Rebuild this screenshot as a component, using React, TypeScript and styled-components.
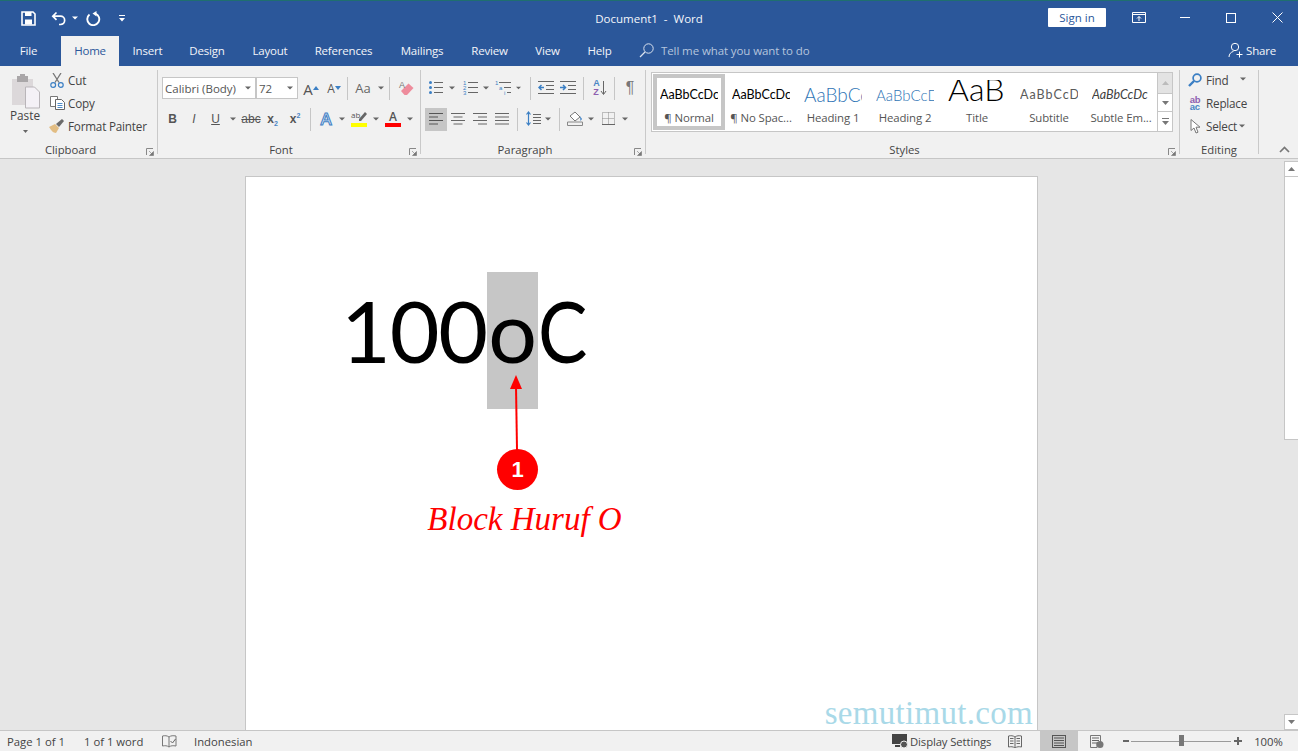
import React from "react";
import styled, { createGlobalStyle } from "styled-components";

const Global = createGlobalStyle`
  html, body { margin: 0; padding: 0; height: 100%; overflow: hidden; }
  body { font-family: "Open Sans", "Noto Sans", sans-serif; font-size: 12px; color: #444; }
  #root { height: 100%; }
`;

const Shell = styled.div`
  height: 751px; width: 1298px; display: flex; flex-direction: column; overflow: hidden; background: #e6e6e6;
`;
const TitleBar = styled.header`
  height: 35px; flex: none; background: #2b579a; border-top: 1px solid #1f6f6f; position: relative;
  display: flex; align-items: center; color: #fff;
`;
const Qat = styled.div`display: flex; align-items: center; padding-left: 21px; height: 100%; padding-bottom: 1px; box-sizing: border-box;`;
const QatBtn = styled.span<{ $w: number }>`width: ${p => p.$w}px; display: flex; align-items: center; flex: none;`;
const DocTitle = styled.div`
  position: absolute; left: 0; right: 0; top: 10px; text-align: center; font-size: 11.5px; line-height: 16px; white-space: pre; color: #f4f6fa;
`;
const WinControls = styled.div`margin-left: auto; display: flex; align-items: center; height: 100%; padding-bottom: 2px; box-sizing: border-box;`;
const SignIn = styled.div`
  width: 58px; height: 19px; background: #fff; color: #2b579a; font-size: 11.5px; line-height: 19px; text-align: center; border-radius: 1px; margin-right: 26px;
`;
const WinBtn = styled.span<{ $w: number }>`width: ${p => p.$w}px; display: flex; align-items: center; flex: none;`;

const TabBar = styled.nav`
  height: 30px; flex: none; background: #2b579a; display: flex; align-items: stretch; color: #fff; font-size: 11.5px; letter-spacing: -0.2px;
`;
const Tab = styled.div<{ $w: number; $active?: boolean; $ml?: number }>`
  width: ${p => p.$w}px; margin-left: ${p => p.$ml ?? 0}px; display: flex; align-items: center; justify-content: center; flex: none; padding-bottom: 2px; box-sizing: border-box;
  background: ${p => (p.$active ? "#f1f1f1" : "transparent")}; color: ${p => (p.$active ? "#2b579a" : "#f3f5f9")};
`;
const TellMe = styled.div`display: flex; align-items: center; gap: 7px; margin-left: 15px; color: #b5c5dd; padding-bottom: 2px; letter-spacing: -0.1px;`;
const Share = styled.div`margin-left: auto; margin-right: 22px; display: flex; align-items: center; gap: 2px; color: #f3f5f9; padding-bottom: 2px;`;

const Ribbon = styled.section`
  height: 88px; flex: none; padding-top: 4px; background: #f1f1f1; border-bottom: 1px solid #c6c6c6; display: flex; align-items: flex-start;
`;
const Group = styled.div<{ $w: number }>`
  width: ${p => p.$w}px; height: 84px; flex: none; box-sizing: border-box; border-right: 1px solid #c9c9c9; display: flex; flex-direction: column; position: relative;
`;
const GroupBody = styled.div<{ $pt?: number; $pl?: number }>`
  flex: 1; min-height: 0; display: flex; padding-top: ${p => p.$pt ?? 0}px; padding-left: ${p => p.$pl ?? 0}px;
`;
const GroupLabel = styled.div<{ $pr?: number }>`
  height: 16px; margin-bottom: -4px; line-height: 16px; font-size: 11.3px; text-align: center; color: #444; padding-right: ${p => p.$pr ?? 0}px;
`;
const Launcher = styled.span`position: absolute; right: 3px; bottom: -2px; width: 8px; height: 8px; display: flex;`;

const PasteCol = styled.div`
  width: 50px; flex: none; display: flex; flex-direction: column; align-items: center; padding-top: 4px; font-size: 11.8px; line-height: 14px;
`;
const PasteLabel = styled.div`margin-top: -1px; height: 16px;`;
const SmallCol = styled.div`display: flex; flex-direction: column; gap: 3px; margin-left: -2px;`;
const SmallRow = styled.div`height: 20px; display: flex; align-items: center; gap: 2px; white-space: nowrap; font-size: 11.7px; letter-spacing: -0.2px;`;
const SmallIcon = styled.span`width: 18px; display: flex; justify-content: center; flex: none;`;

const Stack = styled.div`display: flex; flex-direction: column; gap: 8px;`;
const ToolRow = styled.div`height: 23px; display: flex; align-items: flex-start;`;
const Tool = styled.span<{ $w: number; $on?: boolean }>`
  width: ${p => p.$w}px; height: 23px; flex: none; display: flex; align-items: center; justify-content: center; position: relative; box-sizing: border-box; padding-bottom: 2px;
  background: ${p => (p.$on ? "#c6c6c6" : "transparent")}; color: #555;
`;
const Sep = styled.i<{ $ml?: number }>`
  display: block; width: 1px; height: 23px; flex: none; background: #c6c6c6; margin-left: ${p => p.$ml ?? 3}px; margin-right: 3px;
`;
const Combo = styled.div<{ $w: number; $ml?: number }>`
  width: ${p => p.$w}px; height: 22px; margin-left: ${p => p.$ml ?? 0}px; box-sizing: border-box; flex: none; background: #fff; border: 1px solid #c6c6c6;
  display: flex; align-items: center; justify-content: space-between; padding: 0 4px 0 2px; font-size: 11.5px; color: #555; white-space: nowrap;
`;
const GrowA = styled.span<{ $size: number }>`font-size: ${p => p.$size}px; line-height: 1; color: #555; font-family: "Open Sans", sans-serif; margin-top: 3px;`;
const Mark = styled.span<{ $face?: string }>`
  font-family: "Liberation Sans", sans-serif; font-size: 12px; color: #555; font-weight: ${p => (p.$face === "b" ? 700 : 400)};
  font-style: ${p => (p.$face === "i" ? "italic" : "normal")}; text-decoration: ${p => (p.$face === "u" ? "underline" : p.$face === "s" ? "line-through" : "none")};
  sub, sup { font-size: 7px; line-height: 0; color: #4a86c5; }
`;
const AaText = styled.span`font-size: 13px; color: #666;`;
const Pilcrow = styled.span`font-family: "Liberation Sans", sans-serif; font-size: 16px; color: #777;`;
const ColourA = styled.span<{ $bar: string }>`
  width: 16px; display: flex; flex-direction: column; align-items: center; font-family: "Open Sans", sans-serif; font-size: 12px; line-height: 13px; font-weight: 600; color: #555;
  &::after { content: ""; width: 16px; height: 4px; background: ${p => p.$bar}; }
`;
const HighlightMark = styled.span`
  width: 16px; display: flex; flex-direction: column; align-items: stretch;
  &::after { content: ""; width: 16px; height: 4px; background: #ffff00; }
`;
const HighlightTop = styled.span`
  height: 13px; position: relative; font-size: 8px; line-height: 9px; color: #555; svg { position: absolute; right: 0; top: 1px; }
`;
const FxA = styled.span`font-family: "Open Sans", sans-serif; font-size: 17px; font-weight: 600; color: #d7e6f6; -webkit-text-stroke: 1px #3f7fc4;`;
const SortLetters = styled.span`display: flex; flex-direction: column; font-family: "Liberation Sans", sans-serif; font-size: 9px; line-height: 9px; font-weight: 700; color: #4a86c5; b { color: #8e5fb0; }`;

const Gallery = styled.div`
  margin-left: 5px; width: 522px; height: 60px; box-sizing: border-box; background: #fff; border: 1px solid #c6c6c6; display: flex;
`;
const GalleryItems = styled.div`flex: 1; min-width: 0; display: flex; padding: 1px 0 0 1px;`;
const StyleItem = styled.div<{ $sel?: boolean }>`
  flex: 1; height: 56px; min-width: 0; box-sizing: border-box; padding: 4px 0; display: flex; flex-direction: column; align-items: center;
  box-shadow: ${p => (p.$sel ? "inset 0 0 0 4px #c6c6c6" : "none")};
`;
const Preview = styled.div`width: 58px; height: 28px; margin-top: 2px; overflow: hidden; white-space: nowrap;`;
const PreviewText = styled.span<{ $size: number; $color: string; $italic?: boolean; $sp?: number; $w?: number; $lh?: number }>`
  display: block; font-family: Lato, sans-serif; font-size: ${p => p.$size}px; color: ${p => p.$color}; font-style: ${p => (p.$italic ? "italic" : "normal")};
  letter-spacing: ${p => p.$sp ?? 0}px; font-weight: ${p => p.$w ?? 400}; line-height: ${p => p.$lh ?? 30}px;
`;
const StyleName = styled.div`margin-top: 2px; font-size: 11.4px; letter-spacing: -0.1px; line-height: 16px; color: #555; white-space: nowrap;`;
const GalleryScroll = styled.div`width: 14px; flex: none; border-left: 1px solid #c6c6c6; display: flex; flex-direction: column;`;
const GalleryBtn = styled.div<{ $h: number; $off?: boolean }>`
  height: ${p => p.$h}px; flex: none; box-sizing: border-box; border-bottom: 1px solid #c6c6c6; background: ${p => (p.$off ? "#e3e3e3" : "#fff")};
  display: flex; align-items: center; justify-content: center;
  &:last-child { border-bottom: 0; }
`;
const EditCol = styled.div`display: flex; flex-direction: column; gap: 3px; padding-left: 6px;`;
const Collapse = styled.span`flex: 1; display: flex; justify-content: flex-end; padding-right: 8px; height: 8px; margin-top: 76px;`;
const ReplaceMark = styled.span`display: flex; flex-direction: column; font-family: "Liberation Sans", sans-serif; font-size: 9.5px; line-height: 7.5px; font-weight: 700; color: #4a86c5; b { color: #8e5fb0; font-weight: 700; }`;

const DocArea = styled.main`flex: 1; min-height: 0; display: flex; overflow: hidden;`;
const DocScroll = styled.div`flex: 1; min-width: 0; overflow: hidden;`;
const Page = styled.div`
  position: relative; margin: 17px 0 0 245px; width: 793px; height: 700px; box-sizing: border-box; background: #fff; border: 1px solid #c6c6c6; padding: 95px 0 0 95px;
`;
const TextLine = styled.div`display: flex; align-items: flex-start; font-family: Lato, sans-serif; font-size: 86px; line-height: 115px; color: #000; height: 137px;`;
const Run = styled.span`letter-spacing: -1.2px; white-space: pre;`;
const NarrowRun = styled(Run)`transform: scaleX(0.86); transform-origin: left top;`;
const Selected = styled.span`width: 51px; height: 137px; flex: none; background: #c6c6c6; text-align: center; font-size: 86px;`;
const ArrowLayer = styled.svg`position: absolute; left: 254px; top: 191px;`;
const Badge = styled.div`
  position: absolute; left: 251px; top: 272px; width: 41px; height: 41px; border-radius: 50%; background: #ff0000; color: #fff;
  font-family: "Liberation Sans", sans-serif; font-weight: 700; font-size: 22px; line-height: 41px; text-align: center;
`;
const Caption = styled.div`
  position: absolute; left: 180px; top: 320px; width: 197px; text-align: center; font-family: "Liberation Serif", serif; font-style: italic; font-size: 33px; line-height: 44px; color: #ff0000; white-space: nowrap;
`;
const Watermark = styled.div`
  position: absolute; right: 4px; top: 516px; font-family: "Liberation Serif", serif; font-size: 33px; line-height: 40px; color: #a9d9e8; letter-spacing: 0.3px; white-space: nowrap;
`;
const ScrollBar = styled.aside`width: 14px; flex: none; margin-top: 2px; display: flex; flex-direction: column; background: #e6e6e6;`;
const ScrollBtn = styled.div`height: 16px; flex: none; background: #fff; border: 1px solid #c6c6c6; border-right: 0; box-sizing: border-box; display: flex; align-items: center; justify-content: center;`;
const ScrollThumb = styled.div`height: 263px; flex: none; background: #fff; border: 1px solid #c6c6c6; border-top: 0; border-right: 0; box-sizing: border-box;`;
const ScrollTrack = styled.div`flex: 1;`;

const StatusBar = styled.footer`
  height: 20px; flex: none; background: #f1f1f1; border-top: 1px solid #c6c6c6; display: flex; align-items: stretch; font-size: 11.3px; color: #444;
`;
const StatusItem = styled.span<{ $w: number; $on?: boolean; $center?: boolean; $pl?: number; $pr?: number; $sp?: number }>`
  width: ${p => p.$w}px; flex: none; display: flex; align-items: center; white-space: nowrap; gap: 2px; box-sizing: border-box;
  padding-left: ${p => p.$pl ?? 0}px; padding-right: ${p => p.$pr ?? 0}px; letter-spacing: ${p => p.$sp ?? 0}px;
  justify-content: ${p => (p.$center ? "center" : "flex-start")}; background: ${p => (p.$on ? "#c6c6c6" : "transparent")};
`;
const StatusRight = styled.div`margin-left: auto; display: flex; align-items: stretch;`;
const Slider = styled.span`width: 100px; flex: none; position: relative; display: flex; align-items: center; &::before { content: ""; display: block; width: 100%; height: 1px; background: #9a9a9a; }`;
const Thumb = styled.i`position: absolute; left: 48px; top: 4px; width: 5px; height: 11px; background: #777;`;

const Caret = ({ c = "#666" }: { c?: string }) => (
  <svg width="6" height="4" viewBox="0 0 6 4"><path d="M0 .5h6L3 3.500z" fill={c} /></svg>
);
const Down = ({ c = "#777" }: { c?: string }) => (
  <svg width="7" height="4" viewBox="0 0 7 4"><path d="M0 0h7L3.500 4z" fill={c} /></svg>
);
const Up = ({ c = "#777" }: { c?: string }) => (
  <svg width="7" height="4" viewBox="0 0 7 4"><path d="M0 4h7L3.500 0z" fill={c} /></svg>
);
const LauncherIcon = () => (
  <svg width="8" height="8" viewBox="0 0 8 8"><path d="M.5 7V.5H7" stroke="#888" fill="none" /><path d="M3 3l3.500 3.500M7.500 3.500v4h-4z" stroke="#777" fill="#777" strokeWidth=".6" /></svg>
);
const Lines = ({ x = 0, y, n, w, gap = 4, c = "#666" }: { x?: number; y: number; n: number; w: number; gap?: number; c?: string }) => (
  <>{Array.from({ length: n }, (_, i) => <rect key={i} x={x} y={y + i * gap} width={w} height="1" fill={c} />)}</>
);
const AlignIcon = ({ kind, c = "#666" }: { kind: "l" | "c" | "r" | "j"; c?: string }) => {
  const ws = kind === "j" ? [14, 14, 14, 14] : [14, 9, 14, 9];
  return (
    <svg width="14" height="13" viewBox="0 0 14 13">
      {ws.map((w, i) => <rect key={i} x={kind === "l" || kind === "j" ? 0 : kind === "r" ? 14 - w : (14 - w) / 2} y={1 + i * 3.500} width={w} height="1" fill={c} />)}
    </svg>
  );
};

const App = () => (
  <Shell>
    <Global />
    <TitleBar>
      <Qat>
        <QatBtn $w={30}>
          <svg width="15" height="15" viewBox="0 0 15 15"><path d="M1 1h11l2 2v11H1z" fill="none" stroke="#fff" strokeWidth="1.600" /><rect x="4" y="1" width="6.500" height="4" fill="#fff" /><rect x="4" y="8.500" width="7" height="5" fill="#fff" /></svg>
        </QatBtn>
        <QatBtn $w={21}>
          <svg width="16" height="15" viewBox="0 0 16 15"><path d="M5.500 1.500L1.800 5.200 5.500 8.900M2 5.200h7.500a4 4 0 0 1 0 8.300H8" fill="none" stroke="#fff" strokeWidth="1.700" /></svg>
        </QatBtn>
        <QatBtn $w={14}><Caret c="#fff" /></QatBtn>
        <QatBtn $w={33}>
          <svg width="15" height="15" viewBox="0 0 15 15"><path d="M3.500 3.500A6 6 0 1 0 9.500 2.600" fill="none" stroke="#fff" strokeWidth="1.900" /><path d="M6.500 2.500L10.500 0v5.500z" fill="#fff" /></svg>
        </QatBtn>
        <QatBtn $w={8}>
          <svg width="6" height="7" viewBox="0 0 6 7"><rect width="6" height="1" fill="#fff" /><path d="M0 3h6L3 6.500z" fill="#fff" /></svg>
        </QatBtn>
      </Qat>
      <DocTitle>Document1  -  Word</DocTitle>
      <WinControls>
        <SignIn>Sign in</SignIn>
        <WinBtn $w={48}>
          <svg width="14" height="11" viewBox="0 0 14 11"><path d="M.5 .5h13v10H.5zM.5 2.500h13" fill="none" stroke="#fff" /><path d="M7 9V4.500M5 6.500l2-2 2 2" fill="none" stroke="#fff" /></svg>
        </WinBtn>
        <WinBtn $w={46}><svg width="10" height="1" viewBox="0 0 10 1"><rect width="10" height="1" fill="#fff" /></svg></WinBtn>
        <WinBtn $w={46}><svg width="10" height="10" viewBox="0 0 10 10"><rect x=".5" y=".5" width="9" height="9" fill="none" stroke="#fff" /></svg></WinBtn>
        <WinBtn $w={26}><svg width="11" height="11" viewBox="0 0 11 11"><path d="M.5 .5l10 10M10.500 .5l-10 10" stroke="#fff" /></svg></WinBtn>
      </WinControls>
    </TitleBar>
    <TabBar>
      <Tab $w={45} $ml={6}>File</Tab>
      <Tab $w={58} $ml={10} $active>Home</Tab>
      <Tab $w={57}>Insert</Tab>
      <Tab $w={62}>Design</Tab>
      <Tab $w={64}>Layout</Tab>
      <Tab $w={83}>References</Tab>
      <Tab $w={74}>Mailings</Tab>
      <Tab $w={61}>Review</Tab>
      <Tab $w={55}>View</Tab>
      <Tab $w={49}>Help</Tab>
      <TellMe>
        <svg width="15" height="15" viewBox="0 0 15 15"><circle cx="9.500" cy="5.500" r="4.700" fill="none" stroke="#dbe3ef" /><path d="M6 9L1 14" stroke="#dbe3ef" strokeWidth="1.200" /></svg>
        Tell me what you want to do
      </TellMe>
      <Share>
        <svg width="16" height="16" viewBox="0 0 16 16"><circle cx="7" cy="5" r="3.700" fill="none" stroke="#fff" /><path d="M1 15c0-3 2-5 4.500-5.600M9 9.600" fill="none" stroke="#fff" /><path d="M11.500 9.500v6M8.500 12.500h6" stroke="#fff" /></svg>
        Share
      </Share>
    </TabBar>
    <Ribbon>
      <Group $w={158}>
        <GroupBody>
          <PasteCol>
            <svg width="29" height="35" viewBox="0 0 29 35">
              <path d="M1 5h21v26H1z" fill="#dcd8da" /><rect x="6" y="2" width="11" height="6" fill="#a9a6a8" /><rect x="9" y="0" width="5" height="3" fill="#a9a6a8" />
              <path d="M14.500 13h9l5 5v16h-14z" fill="#f4f1f6" stroke="#b9b5b9" />
            </svg>
            <PasteLabel>Paste</PasteLabel>
            <svg width="7" height="12" viewBox="0 0 7 12"><path d="M1 6h5L3.500 9z" fill="#666" /></svg>
          </PasteCol>
          <SmallCol>
            <SmallRow>
              <SmallIcon>
                <svg width="14" height="15" viewBox="0 0 14 15"><path d="M3 0l6 9.500M11 0L5 9.500" stroke="#777" strokeWidth="1.300" /><circle cx="3.200" cy="12" r="2.400" fill="none" stroke="#3b7fc4" strokeWidth="1.200" /><circle cx="10.800" cy="12" r="2.400" fill="none" stroke="#3b7fc4" strokeWidth="1.200" /></svg>
              </SmallIcon>
              Cut
            </SmallRow>
            <SmallRow>
              <SmallIcon>
                <svg width="15" height="14" viewBox="0 0 15 14"><path d="M.5 .5h7v10h-7z" fill="#fff" stroke="#777" /><path d="M5.500 3.500h6l3 3v7h-9z" fill="#fff" stroke="#666" /><Lines x={7.500} y={7} n={3} w={5} gap={2} c="#4f8cc9" /></svg>
              </SmallIcon>
              Copy
            </SmallRow>
            <SmallRow>
              <SmallIcon>
                <svg width="16" height="14" viewBox="0 0 16 14"><path d="M0 8l6-3 4 4-3 5C4 14 2 11 0 8z" fill="#e2bd83" /><path d="M7 5l3 3 5-6-2-2z" fill="#6b6b6b" /></svg>
              </SmallIcon>
              Format Painter
            </SmallRow>
          </SmallCol>
        </GroupBody>
        <GroupLabel $pr={16}>Clipboard</GroupLabel>
        <Launcher><LauncherIcon /></Launcher>
      </Group>

      <Group $w={263}>
        <GroupBody $pt={7} $pl={4}>
          <Stack>
            <ToolRow>
              <Combo $w={94}>Calibri (Body)<Caret /></Combo>
              <Combo $w={42}>72<Caret /></Combo>
              <Tool $w={26}><GrowA $size={15}>A</GrowA><svg width="6" height="4" viewBox="0 0 6 4"><path d="M0 4h6L3 0z" fill="#3b7fc4" /></svg></Tool>
              <Tool $w={20}><GrowA $size={12}>A</GrowA><svg width="6" height="4" viewBox="0 0 6 4"><path d="M0 0h6L3 4z" fill="#3b7fc4" /></svg></Tool>
              <Sep />
              <Tool $w={24}><AaText>Aa</AaText></Tool>
              <Tool $w={11}><Caret /></Tool>
              <Sep />
              <Tool $w={26}>
                <svg width="16" height="16" viewBox="0 0 16 16"><path d="M3 11l7.500-7.500L15.500 8 9 15H6.500z" fill="#ee8c9c" /><text x="1" y="8" fontSize="9" fill="#777" fontFamily="Liberation Sans">A</text></svg>
              </Tool>
            </ToolRow>
            <ToolRow>
              <Tool $w={21}><Mark $face="b">B</Mark></Tool>
              <Tool $w={22}><Mark $face="i">I</Mark></Tool>
              <Tool $w={21}><Mark $face="u">U</Mark></Tool>
              <Tool $w={14}><Caret /></Tool>
              <Tool $w={22}><Mark $face="s">abc</Mark></Tool>
              <Tool $w={21}><Mark $face="b">x<sub>2</sub></Mark></Tool>
              <Tool $w={24}><Mark $face="b">x<sup>2</sup></Mark></Tool>
              <Sep />
              <Tool $w={24}><FxA>A</FxA></Tool>
              <Tool $w={8}><Caret /></Tool>
              <Tool $w={26}>
                <HighlightMark>
                  <HighlightTop>ab
                    <svg width="9" height="11" viewBox="0 0 9 11"><path d="M1 8L7 1l2 2-6 7H1z" fill="#666" /></svg>
                  </HighlightTop>
                </HighlightMark>
              </Tool>
              <Tool $w={7}><Caret /></Tool>
              <Tool $w={28}><ColourA $bar="#ff0000">A</ColourA></Tool>
              <Tool $w={6}><Caret /></Tool>
            </ToolRow>
          </Stack>
        </GroupBody>
        <GroupLabel $pr={16}>Font</GroupLabel>
        <Launcher><LauncherIcon /></Launcher>
      </Group>

      <Group $w={225}>
        <GroupBody $pt={7} $pl={4}>
          <Stack>
            <ToolRow>
              <Tool $w={21}>
                <svg width="14" height="13" viewBox="0 0 14 13"><circle cx="1.500" cy="1.500" r="1.500" fill="#3b7fc4" /><circle cx="1.500" cy="6.500" r="1.500" fill="#3b7fc4" /><circle cx="1.500" cy="11.500" r="1.500" fill="#3b7fc4" /><Lines x={5} y={1} n={3} w={9} gap={5} /></svg>
              </Tool>
              <Tool $w={12}><Caret /></Tool>
              <Tool $w={24}>
                <svg width="15" height="15" viewBox="0 0 15 15"><text x="0" y="5" fontSize="6" fill="#3b7fc4" fontFamily="Liberation Sans">1</text><text x="0" y="10" fontSize="6" fill="#3b7fc4" fontFamily="Liberation Sans">2</text><text x="0" y="15" fontSize="6" fill="#3b7fc4" fontFamily="Liberation Sans">3</text><Lines x={5} y={2} n={3} w={10} gap={5} /></svg>
              </Tool>
              <Tool $w={8}><Caret /></Tool>
              <Tool $w={26}>
                <svg width="16" height="15" viewBox="0 0 16 15"><text x="0" y="5" fontSize="6" fill="#3b7fc4" fontFamily="Liberation Sans">1</text><text x="4" y="10" fontSize="6" fill="#3b7fc4" fontFamily="Liberation Sans">a</text><text x="9" y="15" fontSize="6" fill="#3b7fc4" fontFamily="Liberation Sans">i</text><rect x="4" y="2" width="12" height="1" fill="#666" /><rect x="9" y="7" width="7" height="1" fill="#666" /><rect x="12" y="12" width="4" height="1" fill="#666" /></svg>
              </Tool>
              <Tool $w={5}><Caret /></Tool>
              <Sep $ml={9} />
              <Tool $w={24}>
                <svg width="16" height="13" viewBox="0 0 16 13"><Lines x={0} y={0} n={2} w={16} gap={12} /><Lines x={8} y={4} n={2} w={8} gap={4} /><path d="M6 6.500H1M3.500 4L1 6.500 3.500 9" stroke="#3b7fc4" strokeWidth="1.500" fill="none" /></svg>
              </Tool>
              <Tool $w={20}>
                <svg width="16" height="13" viewBox="0 0 16 13"><Lines x={0} y={0} n={2} w={16} gap={12} /><Lines x={8} y={4} n={2} w={8} gap={4} /><path d="M0 6.500h5.500M3 4l2.500 2.500L3 9" stroke="#3b7fc4" strokeWidth="1.500" fill="none" /></svg>
              </Tool>
              <Sep $ml={5} />
              <Tool $w={26}>
                <SortLetters>A<b>Z</b></SortLetters>
                <svg width="7" height="16" viewBox="0 0 7 16"><path d="M3.500 1v13M1 11l2.500 3.500L6 11" stroke="#666" fill="none" /></svg>
              </Tool>
              <Sep $ml={1} />
              <Tool $w={24}><Pilcrow>¶</Pilcrow></Tool>
            </ToolRow>
            <ToolRow>
              <Tool $w={22} $on><AlignIcon kind="l" c="#555" /></Tool>
              <Tool $w={22}><AlignIcon kind="c" /></Tool>
              <Tool $w={22}><AlignIcon kind="r" /></Tool>
              <Tool $w={22}><AlignIcon kind="j" /></Tool>
              <Sep $ml={4} />
              <Tool $w={24}>
                <svg width="15" height="15" viewBox="0 0 15 15"><path d="M2.500 1v13M.5 3.500l2-2.500 2 2.500M.5 11.500l2 2.500 2-2.500" stroke="#3b7fc4" fill="none" strokeWidth="1.200" /><Lines x={7} y={3} n={4} w={8} gap={3} /></svg>
              </Tool>
              <Tool $w={6}><Caret /></Tool>
              <Sep $ml={8} />
              <Tool $w={24}>
                <svg width="16" height="15" viewBox="0 0 16 15"><path d="M3 5l5-4 5 5-5 4z" fill="#fff" stroke="#777" /><path d="M13 5l2 3-1.500 2z" fill="#3b7fc4" /><path d="M.5 11h15v3.500H.5z" fill="#f1f1f1" stroke="#888" /></svg>
              </Tool>
              <Tool $w={8}><Caret /></Tool>
              <Tool $w={26}>
                <svg width="13" height="13" viewBox="0 0 13 13"><path d="M.5 .5h12v12H.5zM6.500 .5v12M.5 6.500h12" fill="none" stroke="#888" strokeDasharray="1 1" /><path d="M0 12.500h13" stroke="#666" /></svg>
              </Tool>
              <Tool $w={8}><Caret /></Tool>
            </ToolRow>
          </Stack>
        </GroupBody>
        <GroupLabel $pr={16}>Paragraph</GroupLabel>
        <Launcher><LauncherIcon /></Launcher>
      </Group>

      <Group $w={534}>
        <GroupBody $pt={2}>
          <Gallery>
            <GalleryItems>
              <StyleItem $sel><Preview><PreviewText $size={12.500} $color="#000">AaBbCcDc</PreviewText></Preview><StyleName>¶ Normal</StyleName></StyleItem>
              <StyleItem><Preview><PreviewText $size={12.500} $color="#000">AaBbCcDc</PreviewText></Preview><StyleName>¶ No Spac...</StyleName></StyleItem>
              <StyleItem><Preview><PreviewText $size={19} $color="#2e74b5" $w={300}>AaBbCc</PreviewText></Preview><StyleName>Heading 1</StyleName></StyleItem>
              <StyleItem><Preview><PreviewText $size={15} $color="#2e74b5" $w={300}>AaBbCcD</PreviewText></Preview><StyleName>Heading 2</StyleName></StyleItem>
              <StyleItem><Preview><PreviewText $size={32} $color="#000" $w={300} $lh={17}>AaB</PreviewText></Preview><StyleName>Title</StyleName></StyleItem>
              <StyleItem><Preview><PreviewText $size={12.500} $color="#5a5a5a" $sp={1}>AaBbCcD</PreviewText></Preview><StyleName>Subtitle</StyleName></StyleItem>
              <StyleItem><Preview><PreviewText $size={12.500} $color="#404040" $italic>AaBbCcDc</PreviewText></Preview><StyleName>Subtle Em...</StyleName></StyleItem>
            </GalleryItems>
            <GalleryScroll>
              <GalleryBtn $h={21} $off><Up c="#bbb" /></GalleryBtn>
              <GalleryBtn $h={18}><Down /></GalleryBtn>
              <GalleryBtn $h={19}><svg width="7" height="7" viewBox="0 0 7 7"><rect width="7" height="1" fill="#777" /><path d="M0 3h7L3.500 7z" fill="#777" /></svg></GalleryBtn>
            </GalleryScroll>
          </Gallery>
        </GroupBody>
        <GroupLabel $pr={16}>Styles</GroupLabel>
        <Launcher><LauncherIcon /></Launcher>
      </Group>

      <Group $w={79}>
        <GroupBody>
          <EditCol>
            <SmallRow>
              <SmallIcon>
                <svg width="14" height="14" viewBox="0 0 14 14"><circle cx="9" cy="5" r="3.900" fill="none" stroke="#3b7fc4" strokeWidth="1.700" /><path d="M6 8l-5 5" stroke="#3b7fc4" strokeWidth="2.400" /></svg>
              </SmallIcon>
              <span>Find</span><Tool $w={24}><Caret /></Tool>
            </SmallRow>
            <SmallRow>
              <SmallIcon><ReplaceMark><b>ab</b><span>ac</span></ReplaceMark></SmallIcon>
              Replace
            </SmallRow>
            <SmallRow>
              <SmallIcon>
                <svg width="11" height="15" viewBox="0 0 11 15"><path d="M1 .5v11l3-2.500 2 5 2-.8-2-5h4z" fill="#fff" stroke="#777" /></svg>
              </SmallIcon>
              <span>Select</span><Caret />
            </SmallRow>
          </EditCol>
        </GroupBody>
        <GroupLabel>Editing</GroupLabel>
      </Group>
      <Collapse>
        <svg width="11" height="7" viewBox="0 0 11 7"><path d="M1 6l4.500-4.500L10 6" fill="none" stroke="#777" strokeWidth="1.700" /></svg>
      </Collapse>
    </Ribbon>

    <DocArea>
      <DocScroll>
        <Page>
          <TextLine>
            <Run>100</Run>
            <Selected>o</Selected>
            <NarrowRun>C</NarrowRun>
          </TextLine>
          <ArrowLayer width="34" height="86" viewBox="0 0 34 86">
            <path d="M17 82L16 18" stroke="#ff0000" strokeWidth="2" />
            <path d="M16 7L22 21H10z" fill="#ff0000" />
          </ArrowLayer>
          <Badge>1</Badge>
          <Caption>Block Huruf O</Caption>
          <Watermark>semutimut.com</Watermark>
        </Page>
      </DocScroll>
      <ScrollBar>
        <ScrollBtn><Up /></ScrollBtn>
        <ScrollThumb />
        <ScrollTrack />
        <ScrollBtn><Down /></ScrollBtn>
      </ScrollBar>
    </DocArea>

    <StatusBar>
      <StatusItem $w={84} $pl={7}>Page 1 of 1</StatusItem>
      <StatusItem $w={78}>1 of 1 word</StatusItem>
      <StatusItem $w={32}>
        <svg width="15" height="15" viewBox="0 0 15 15"><path d="M7 3C5 1.500 3 1.500 .5 2v10c2.500-.5 4.500-.5 6.500 1V3zM7 3c2-1.500 4-1.500 7-1v10c-3-.5-5-.5-7 1" fill="none" stroke="#777" /><path d="M8.500 7l2 2 3-4" fill="none" stroke="#666" /></svg>
      </StatusItem>
      <StatusItem $w={80}>Indonesian</StatusItem>
      <StatusRight>
        <StatusItem $w={124} $pl={14} $sp={-0.1}>
          <svg width="16" height="15" viewBox="0 0 16 15"><rect width="15" height="10" fill="#444" /><rect x="3" y="11" width="5" height="2" fill="#444" /><circle cx="12" cy="10.500" r="3.500" fill="#555" stroke="#f1f1f1" /></svg>
          Display Settings
        </StatusItem>
        <StatusItem $w={26} $center>
          <svg width="14" height="13" viewBox="0 0 14 13"><path d="M7 2C5 .5 3 .5 .5 1v11c2.500-.5 4.500-.5 6.500 1 2-1.500 4-1.500 6.500-1V1C11 .5 9 .5 7 2zM7 2v11" fill="none" stroke="#666" /><Lines x={2} y={3} n={3} w={3.500} gap={2.500} /><Lines x={8.500} y={3} n={3} w={3.500} gap={2.500} /></svg>
        </StatusItem>
        <StatusItem $w={12} />
        <StatusItem $w={38} $on $center>
          <svg width="14" height="13" viewBox="0 0 14 13"><rect x=".5" y=".5" width="13" height="12" fill="none" stroke="#555" /><Lines x={2} y={2.500} n={4} w={10} gap={2.500} c="#555" /></svg>
        </StatusItem>
        <StatusItem $w={12} />
        <StatusItem $w={14} $center>
          <svg width="14" height="13" viewBox="0 0 14 13"><path d="M.5 .5h10v7H7v5H.5z" fill="none" stroke="#777" /><Lines x={2} y={2.500} n={3} w={7} gap={2.500} /><circle cx="10" cy="9.500" r="3.500" fill="#777" /></svg>
        </StatusItem>
        <StatusItem $w={17} />
        <StatusItem $w={10} $center><svg width="6" height="2" viewBox="0 0 6 2"><rect width="6" height="2" fill="#666" /></svg></StatusItem>
        <Slider><Thumb /></Slider>
        <StatusItem $w={14} $center><svg width="8" height="8" viewBox="0 0 8 8"><path d="M0 3h8v2H0zM3 0h2v8H3z" fill="#666" /></svg></StatusItem>
        <StatusItem $w={53} $center $pr={6}>100%</StatusItem>
      </StatusRight>
    </StatusBar>
  </Shell>
);

export default App;
